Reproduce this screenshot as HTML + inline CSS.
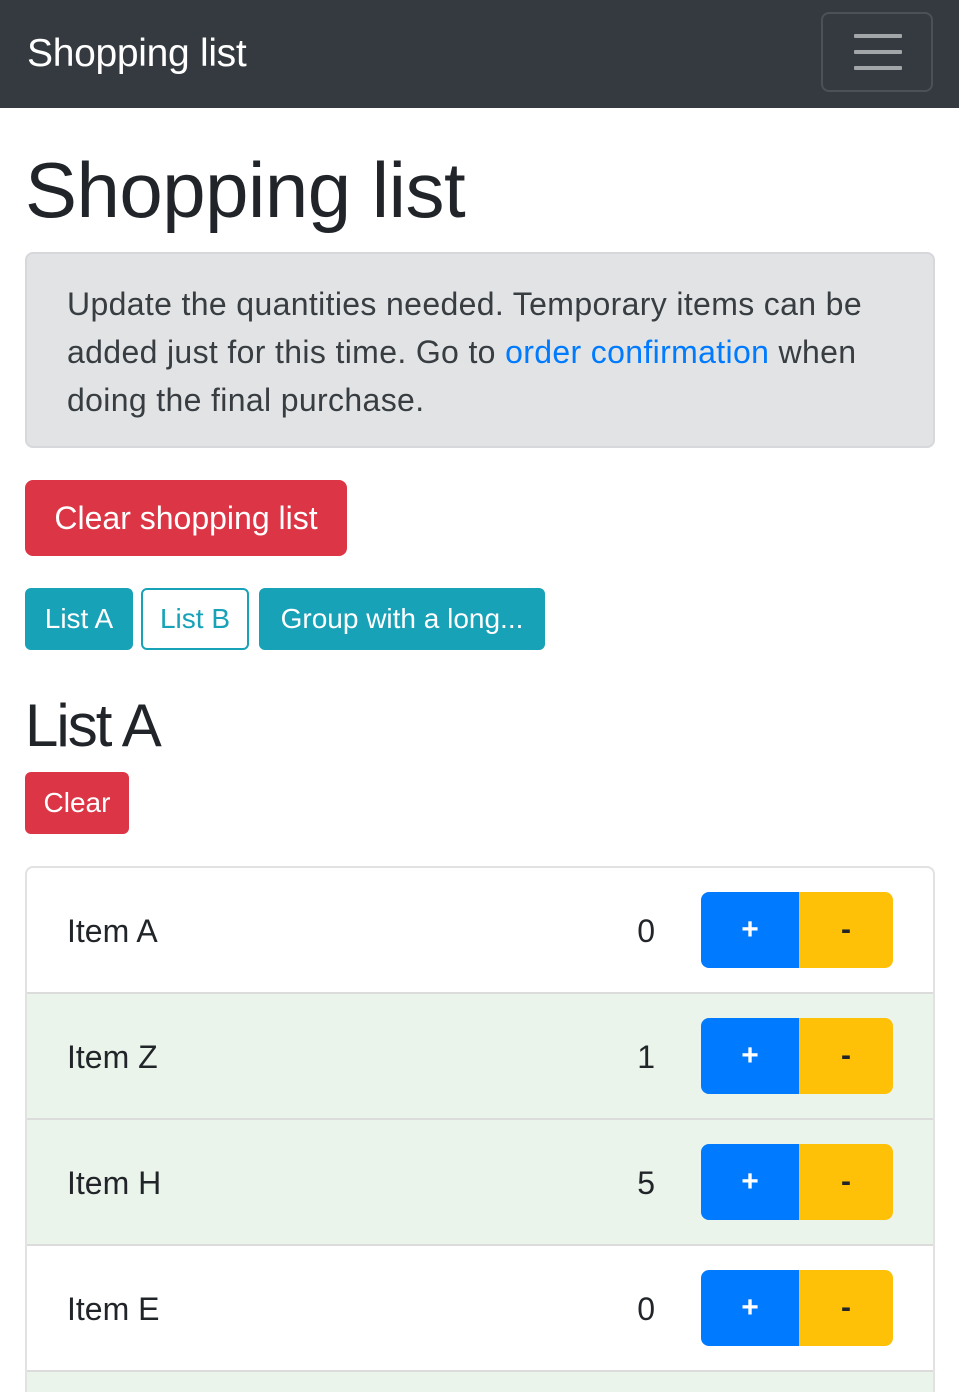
<!DOCTYPE html>
<html style="width:959px;height:1392px;overflow:hidden"><head><meta charset="utf-8"><style>
*{box-sizing:border-box;margin:0;padding:0}
body{width:959px;height:1392px;overflow:hidden;background:#fff;font-family:"Liberation Sans",Helvetica,Arial,sans-serif;color:#212529;position:relative}
.nav{position:absolute;left:0;top:0;width:959px;height:108px;background:#343a40}
.brand{position:absolute;left:27px;top:34px;font-size:39px;line-height:40px;color:#fff;letter-spacing:-0.3px}
.tog{position:absolute;left:821px;top:12px;width:112px;height:80px;border:2px solid rgba(255,255,255,.12);border-radius:8px}
.tog i{position:absolute;left:31px;width:48px;height:4px;background:rgba(255,255,255,.55);border-radius:1px}
h1{position:absolute;left:25px;top:142px;font-size:78px;line-height:96px;font-weight:400;letter-spacing:-0.5px}
.alert{position:absolute;left:25px;top:252px;width:910px;height:196px;background:#e2e3e5;border:2px solid #d6d8db;border-radius:8px;padding:26px 40px;font-size:32px;line-height:48px;color:#383d41;letter-spacing:0.35px}
.alert a{color:#007bff;text-decoration:none}
.btn{position:absolute;display:flex;align-items:center;justify-content:center;color:#fff;border-radius:6px}
h2{position:absolute;left:25px;top:694px;font-size:60px;line-height:64px;font-weight:400;letter-spacing:-2px}
.lg{position:absolute;left:25px;top:866px;width:910px;height:526px;border:2px solid #e2e2e2;border-bottom:none;border-radius:8px 8px 0 0;overflow:hidden}
.row{height:126px;border-bottom:2px solid #dcdcdc;position:relative;font-size:32px}
.row.g{background:#ebf4ea}
.row .n{position:absolute;left:40px;top:0;line-height:126px}
.row .c{position:absolute;right:278px;top:0;line-height:126px}
.row .p,.row .m{position:absolute;top:24px;height:76px;display:flex;align-items:center;justify-content:center;font-size:30px;font-weight:bold}
.row .p{left:674px;width:98px;background:#007bff;color:#fff;border-radius:8px 0 0 8px}
.row .m{left:772px;width:94px;background:#ffc107;color:#212529;border-radius:0 8px 8px 0}
</style></head><body>
<div class="nav"><div class="brand">Shopping list</div><div class="tog"><i style="top:20px"></i><i style="top:36px"></i><i style="top:52px"></i></div></div>
<h1>Shopping list</h1>
<div class="alert">Update the quantities needed. Temporary items can be added just for this time. Go to <a>order confirmation</a> when doing the final purchase.</div>
<div class="btn" style="left:25px;top:480px;width:322px;height:76px;background:#dc3545;font-size:32px;border-radius:8px">Clear shopping list</div>
<div class="btn" style="left:25px;top:588px;width:108px;height:62px;background:#17a2b8;font-size:28px">List A</div>
<div class="btn" style="left:141px;top:588px;width:108px;height:62px;border:2px solid #17a2b8;color:#17a2b8;font-size:28px">List B</div>
<div class="btn" style="left:259px;top:588px;width:286px;height:62px;background:#17a2b8;font-size:28px">Group with a long...</div>
<h2>List A</h2>
<div class="btn" style="left:25px;top:772px;width:104px;height:62px;background:#dc3545;font-size:28px">Clear</div>
<div class="lg">
<div class="row"><span class="n">Item A</span><span class="c">0</span><div class="p">+</div><div class="m">-</div></div>
<div class="row g"><span class="n">Item Z</span><span class="c">1</span><div class="p">+</div><div class="m">-</div></div>
<div class="row g"><span class="n">Item H</span><span class="c">5</span><div class="p">+</div><div class="m">-</div></div>
<div class="row"><span class="n">Item E</span><span class="c">0</span><div class="p">+</div><div class="m">-</div></div>
<div class="row g"></div>
</div>
</body></html>
